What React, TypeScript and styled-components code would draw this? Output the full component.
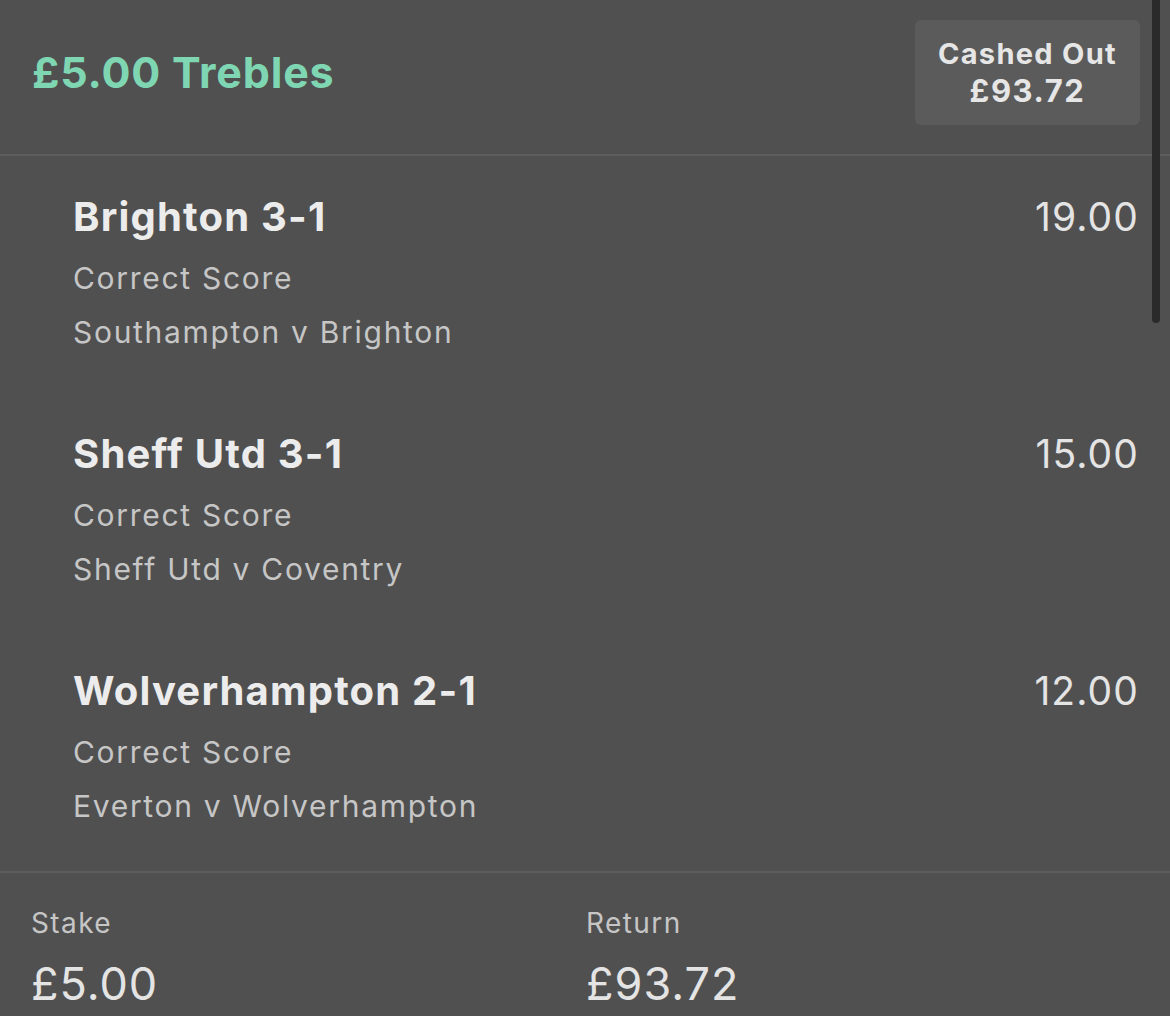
import styled, { createGlobalStyle } from 'styled-components';

type Leg = {
  selection: string;
  market: string;
  event: string;
  odds: string;
};

const legs: Leg[] = [
  { selection: 'Brighton 3-1', market: 'Correct Score', event: 'Southampton v Brighton', odds: '19.00' },
  { selection: 'Sheff Utd 3-1', market: 'Correct Score', event: 'Sheff Utd v Coventry', odds: '15.00' },
  { selection: 'Wolverhampton 2-1', market: 'Correct Score', event: 'Everton v Wolverhampton', odds: '12.00' },
];

const GlobalStyle = createGlobalStyle`
  html, body {
    margin: 0;
    padding: 0;
    background: #505050;
  }
  body {
    font-family: Inter, 'Noto Sans', 'Liberation Sans', sans-serif;
    -webkit-font-smoothing: antialiased;
  }
`;

export default function App() {
  return (
    <>
      <GlobalStyle />
      <BetCard>
        <Header>
          <Title>£5.00 Trebles</Title>
          <CashedOut>
            <span>Cashed Out</span>
            <span className='amount'>£93.72</span>
          </CashedOut>
        </Header>
        <LegList>
          {legs.map((leg) => (
            <LegRow key={leg.selection}>
              <div className='info'>
                <div className='selection'>{leg.selection}</div>
                <div className='sub'>{leg.market}</div>
                <div className='sub'>{leg.event}</div>
              </div>
              <div className='odds'>{leg.odds}</div>
            </LegRow>
          ))}
        </LegList>
        <Footer>
          <Summary>
            <div className='label'>Stake</div>
            <div className='value'>£5.00</div>
          </Summary>
          <Summary>
            <div className='label'>Return</div>
            <div className='value'>£93.72</div>
          </Summary>
        </Footer>
        <ScrollThumb />
      </BetCard>
    </>
  );
}

const BetCard = styled.div`
  position: relative;
  width: 1170px;
  height: 1016px;
  overflow: hidden;
  background: #505050;
  display: flex;
  flex-direction: column;
`;

const Header = styled.div`
  height: 156px;
  box-sizing: border-box;
  padding: 0 30px 10px 32px;
  display: flex;
  align-items: center;
  justify-content: space-between;
  border-bottom: 2px solid #5d5d5d;
`;

const Title = styled.div`
  color: #7fd6b3;
  font-size: 43px;
  font-weight: 700;
  letter-spacing: 0.8px;
`;

const CashedOut = styled.div`
  width: 225px;
  height: 105px;
  box-sizing: border-box;
  background: #5b5b5b;
  border-radius: 6px;
  display: flex;
  flex-direction: column;
  align-items: center;
  justify-content: center;
  color: #e6e6e6;
  font-size: 29px;
  font-weight: 700;
  line-height: 37px;
  letter-spacing: 1.3px;

  .amount {
    font-size: 31px;
    letter-spacing: 1.6px;
  }
`;

const LegList = styled.div`
  display: flex;
  flex-direction: column;
`;

const LegRow = styled.div`
  height: 237px;
  box-sizing: border-box;
  padding: 37px 31px 0 73px;
  display: flex;
  justify-content: space-between;
  align-items: flex-start;

  .selection {
    color: #ececec;
    font-size: 40px;
    font-weight: 700;
    line-height: 48px;
    letter-spacing: 1.2px;
    margin-bottom: 10px;
  }

  .sub {
    color: #c6c6c6;
    font-size: 30px;
    line-height: 54px;
    letter-spacing: 1.7px;
  }

  .odds {
    color: #e4e4e4;
    font-size: 39px;
    line-height: 48px;
    letter-spacing: 1.1px;
  }
`;

const Footer = styled.div`
  border-top: 2px solid #5d5d5d;
  margin-top: auto;
  height: 145px;
  box-sizing: border-box;
  padding: 32px 0 0 31px;
  display: grid;
  grid-template-columns: 555px 1fr;
`;

const Summary = styled.div`
  .label {
    color: #c6c6c6;
    font-size: 28px;
    line-height: 36px;
    letter-spacing: 1.4px;
  }

  .value {
    color: #e4e4e4;
    font-size: 45px;
    line-height: 54px;
    letter-spacing: 1px;
    margin-top: 16px;
  }
`;

const ScrollThumb = styled.div`
  position: absolute;
  top: 0;
  right: 10px;
  width: 8px;
  height: 323px;
  background: #2a2a2a;
  border-radius: 0 0 4px 4px;
`;
